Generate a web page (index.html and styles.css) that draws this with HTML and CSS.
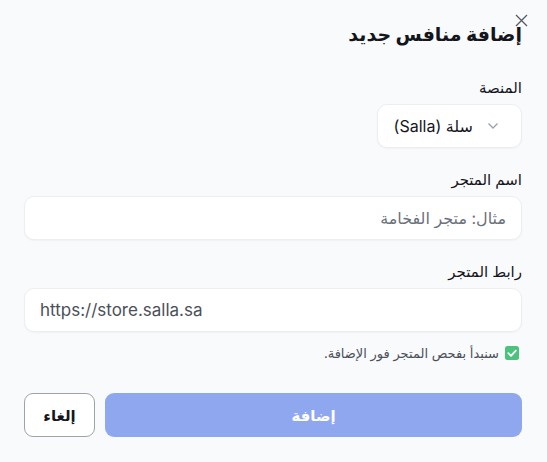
FILE: index.html
```html
<!DOCTYPE html>
<html lang="ar" dir="rtl">
<head>
    <meta charset="UTF-8">
    <meta name="viewport" content="width=device-width, initial-scale=1.0">
    <title>إضافة منافس جديد</title>
    <link rel="stylesheet" href="styles.css">
</head>
<body>

    <div class="dialog">
        <button class="close" aria-label="إغلاق">
            <svg width="13" height="13" viewBox="0 0 13 13">
                <path d="M1 1 L12 12 M12 1 L1 12" stroke="#555b66" stroke-width="1.3" fill="none"/>
            </svg>
        </button>

        <h2 class="title">إضافة منافس جديد</h2>

        <div class="field">
            <label>المنصة</label>
            <div class="select">
                <svg width="12" height="8" viewBox="0 0 12 8">
                    <path d="M1.5 1.5 L6 6 L10.5 1.5" stroke="#9aa0aa" stroke-width="1.3" fill="none"/>
                </svg>
                <span>سلة (Salla)</span>
            </div>
        </div>

        <div class="field">
            <label>اسم المتجر</label>
            <input class="input" type="text" placeholder="مثال: متجر الفخامة">
        </div>

        <div class="field">
            <label>رابط المتجر</label>
            <input class="input ltr" type="text" value="https://store.salla.sa">
        </div>

        <p class="note">
            <svg width="14" height="14" viewBox="0 0 14 14">
                <rect width="14" height="14" rx="2.5" fill="#4cc37c"/>
                <path d="M3.3 7.2 L6 9.8 L10.8 4.6" stroke="#fff" stroke-width="1.8" fill="none" stroke-linecap="round" stroke-linejoin="round"/>
            </svg>
            سنبدأ بفحص المتجر فور الإضافة.
        </p>

        <div class="actions">
            <button class="btn primary">إضافة</button>
            <button class="btn ghost">إلغاء</button>
        </div>
    </div>

</body>
</html>
```

FILE: styles.css
```css
body {
    margin: 0;
    font-family: Inter, "DejaVu Sans", sans-serif;
    background-color: #f9fafc;
    color: #14161c;
}
.dialog {
    position: relative;
    padding: 20px 25px 24px 24px;
}
.close {
    position: absolute;
    top: 14px;
    right: 19px;
    background: none;
    border: none;
    padding: 0;
    cursor: pointer;
}
.title {
    margin: 0 0 27px;
    font-size: 19px;
    font-weight: 700;
    line-height: 30px;
}
.field {
    display: flex;
    flex-direction: column;
    align-items: flex-start;
    margin-bottom: 21px;
}
.field label {
    font-size: 15px;
    font-weight: 500;
    line-height: 22px;
    margin-bottom: 5px;
}
.select {
    display: flex;
    align-items: center;
    gap: 14px;
    height: 44px;
    box-sizing: border-box;
    padding: 0 22px 0 16px;
    background: #fff;
    border: 1px solid #eceef2;
    border-radius: 10px;
    box-shadow: 0 1px 2px rgba(0, 0, 0, 0.04);
    font-size: 16px;
}
.input {
    width: 100%;
    height: 44px;
    box-sizing: border-box;
    padding: 0 15px;
    background: #fff;
    border: 1px solid #eceef2;
    border-radius: 10px;
    box-shadow: 0 1px 2px rgba(0, 0, 0, 0.04);
    font-family: inherit;
    font-size: 16px;
    color: #4a505a;
}
.input::placeholder {
    color: #6b717c;
}
.ltr {
    direction: ltr;
    font-size: 17px;
}
.note {
    display: flex;
    align-items: center;
    gap: 6px;
    margin: -8px 3px 0 0;
    font-size: 13px;
    color: #4a505a;
}
.actions {
    display: flex;
    gap: 10px;
    margin-top: 32px;
}
.btn {
    height: 44px;
    border-radius: 9px;
    font-family: inherit;
    font-size: 15px;
    font-weight: 700;
    cursor: pointer;
}
.primary {
    flex: 1;
    background: #8fa7ef;
    color: #fff;
    border: none;
}
.ghost {
    width: 71px;
    background: #fff;
    color: #14161c;
    border: 1px solid #9ea3ab;
}
```
